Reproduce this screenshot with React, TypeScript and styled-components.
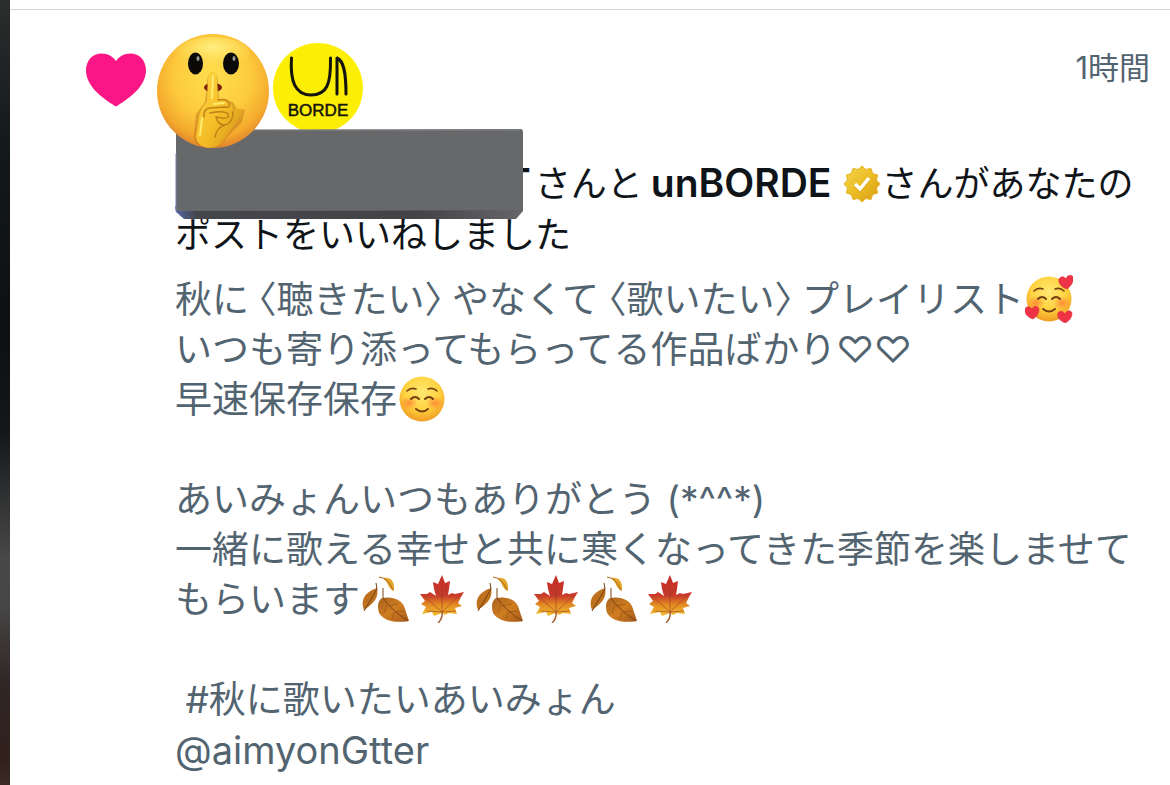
import React from "react";
import styled, { createGlobalStyle } from "styled-components";

const GlobalStyle = createGlobalStyle`
  * { box-sizing: border-box; }
  body {
    margin: 0;
    background: #ffffff;
    font-family: Inter, "Noto Sans CJK JP", sans-serif;
  }
`;

const Page = styled.div`
  display: flex;
  min-height: 100vh;
`;

const Rail = styled.div`
  flex: none;
  width: 10px;
  background: linear-gradient(
    #2a2e2d 0%, #14191b 18%, #0c1013 42%, #151719 55%,
    #484848 71%, #474646 77%, #302725 87%, #30201c 96%, #3a2a26 100%
  );
`;

const Feed = styled.main`
  flex: 1;
  min-width: 0;
  padding-top: 9px;
`;

const Notification = styled.article`
  display: grid;
  grid-template-columns: 90px minmax(0, 1fr);
  padding: 24px 20px 8px 75px;
  border-top: 1px solid #cfd5d5;
`;

const LikeColumn = styled.div`
  padding-top: 19px;
`;

const TopRow = styled.div`
  display: flex;
  align-items: flex-start;
  justify-content: space-between;
`;

const Avatars = styled.div`
  display: flex;
  gap: 4px;
  margin-left: -18px;
`;

const FaceAvatar = styled.svg`
  position: relative;
  z-index: 2;
  width: 112px;
  height: 114px;
`;

const LogoAvatar = styled.svg`
  width: 90px;
  height: 90px;
  margin-top: 9px;
`;

const Time = styled.time`
  margin-top: 12px;
  font-size: 31px;
  line-height: 44px;
  color: #536471;
`;

const Summary = styled.p`
  position: relative;
  margin: 9px 0 0;
  padding-right: 8px;
  font-size: 36px;
  line-height: 51px;
  color: #0f1419;
`;

const HiddenName = styled.span`
  display: inline-block;
  width: 330px;
`;

const Name = styled.strong<{ $before?: number; $after: number }>`
  margin: 0 ${(p) => p.$after}px 0 ${(p) => p.$before ?? 0}px;
  font-size: 39px;
  font-weight: 600;
`;

const Redaction = styled.svg`
  position: absolute;
  z-index: 1;
  top: -28px;
  left: 0;
  width: 349px;
  height: 91px;
`;

const Badge = styled.svg`
  width: 38px;
  height: 38px;
  vertical-align: -6px;
`;

const Post = styled.div`
  margin-top: 14px;
  padding-right: 8px;
  font-size: 37px;
  line-height: 50px;
  color: #536471;
`;

const Line = styled.div`
  min-height: 50px;
  white-space: pre-wrap;
`;

const Mention = styled.a`
  font-size: 38px;
  color: inherit;
  text-decoration: none;
`;

const Open = styled.span`
  margin-left: 9px;
  font-feature-settings: "halt";
`;

const Close = styled.span`
  margin-right: 9px;
  font-feature-settings: "halt";
`;

const EmojiArt = styled.svg`
  width: 48px;
  height: 48px;
  margin: 0 8px 0 1px;
  vertical-align: -10px;
`;

const Heart = () => (
  <svg width="62" height="54" viewBox="0 0 62 54" role="img" aria-label="いいね">
    <path fill="#fa1684" d="M31 53.500C22 48 1 35 1 17.500C1 7 8 .5 16.500 .5C23 .5 28 3.500 31 8C34 3.500 39 .5 45.500 .5C54 .5 61 7 61 17.500C61 35 40 48 31 53.500Z" />
  </svg>
);

const Shush = () => (
  <FaceAvatar viewBox="0 0 112 114" role="img" aria-label="しーっの顔">
    <defs>
      <radialGradient id="shushFace" cx="50%" cy="38%" r="62%">
        <stop offset="0" stopColor="#ffdf4f" />
        <stop offset=".55" stopColor="#fdcb3d" />
        <stop offset=".85" stopColor="#f4a92d" />
        <stop offset="1" stopColor="#e0852b" />
      </radialGradient>
      <radialGradient id="shushShine" cx="50%" cy="30%" r="60%">
        <stop offset="0" stopColor="#fff38c" stopOpacity=".9" />
        <stop offset="1" stopColor="#ffe25a" stopOpacity="0" />
      </radialGradient>
      <linearGradient id="shushHand" x1="0" y1="0" x2="1" y2="1">
        <stop offset="0" stopColor="#ffd845" />
        <stop offset=".55" stopColor="#f4bd27" />
        <stop offset="1" stopColor="#cf8b17" />
      </linearGradient>
    </defs>
    <ellipse cx="56" cy="57" rx="56" ry="57" fill="url(#shushFace)" />
    <ellipse cx="56" cy="20" rx="38" ry="17" fill="url(#shushShine)" />
    <ellipse cx="38.500" cy="29.500" rx="7.500" ry="11" fill="#0b0a09" />
    <ellipse cx="74" cy="29.500" rx="8" ry="11" fill="#0b0a09" />
    <ellipse cx="41" cy="24.500" rx="1.500" ry="2.500" fill="#9a9a96" />
    <ellipse cx="77" cy="24.500" rx="1.500" ry="2.500" fill="#9a9a96" />
    <ellipse cx="56" cy="53.500" rx="9" ry="4.500" fill="#7a1d10" />
    <path fill="#b0640f" opacity=".4" d="M48 68L50 47Q51 38 56 38Q61 39 61 47L62 65L76 68L80 75L88 76L85 88L71 102Q63 114 54 114Q37 114 37 101L39 80Z" />
    <path fill="url(#shushHand)" d="M50 67L51 44Q51 38 56 38Q60 38 60 44L61 66Q69 64 72 69Q76 70 76 78Q79 73 84 75Q88 78 82 84L69 103Q63 114 52 114Q39 112 39 102L42 83Q43 76 50 67Z" />
    <g fill="none" stroke="#bf8117" strokeWidth="1.500" strokeLinecap="round">
      <path d="M61 66Q70 64 72 69Q74 74 68 73L53 74Q46 75 47 83" />
      <path d="M53 79Q68 76 71 80Q73 85 65 84L59 83" />
      <path d="M59 83Q61 91 68 91Q76 89 76 78" />
      <path d="M68 91Q60 93 58 103" />
    </g>
    <path fill="none" stroke="#ffec73" strokeWidth="2" strokeLinecap="round" d="M56 42L55 64M45 84L43 101M57 70L67 69" />
  </FaceAvatar>
);

const LabelLogo = () => (
  <LogoAvatar viewBox="0 0 90 90" role="img" aria-label="unBORDE">
    <circle cx="45" cy="45" r="45" fill="#fcee04" />
    <g fill="none" stroke="#15150d" strokeWidth="3" strokeLinecap="round" strokeLinejoin="round">
      <path d="M18.500 15C17 38 22 52 38 52C54 52 58 41 57.500 15" />
      <path d="M64 51L64 15C71 18 73 30 73 51" />
    </g>
    <text x="45" y="73" textAnchor="middle" fontFamily="Liberation Sans, sans-serif" fontSize="17" stroke="#15150d" strokeWidth="0.5" fill="#15150d">BORDE</text>
  </LogoAvatar>
);

const Block = () => (
  <Redaction viewBox="0 0 349 92" preserveAspectRatio="none" aria-hidden="true">
    <defs>
      <linearGradient id="blockEdge" x1="0" x2="1" y1="0" y2="0">
        <stop offset="0" stopColor="#5568ad" />
        <stop offset=".06" stopColor="#45464c" />
        <stop offset=".7" stopColor="#444446" />
        <stop offset="1" stopColor="#66666a" />
      </linearGradient>
    </defs>
    <path d="M0 78L348 78L348 83L341 91L9 91L1 84Z" fill="url(#blockEdge)" />
    <path d="M1 2Q1 1 3 1L345 0Q348 0 348 3L348 82L1 83Z" fill="#67686a" />
    <path d="M1 25L1 83" stroke="#7582b4" strokeWidth="1" />
    <path d="M3 1L345 1" stroke="#858688" strokeWidth="1" />
  </Redaction>
);

const sealPoints = Array.from({ length: 24 }, (_, i) => {
  const a = (i * Math.PI) / 12 - Math.PI / 2;
  const r = i % 2 ? 15 : 18;
  return `${(19 + r * Math.cos(a)).toFixed(1)},${(19 + r * Math.sin(a)).toFixed(1)}`;
}).join(" ");

const Verified = () => (
  <Badge viewBox="0 0 38 38" role="img" aria-label="認証済み">
    <defs>
      <linearGradient id="seal" x1="0" y1="0" x2="1" y2="1">
        <stop offset="0" stopColor="#f6d54e" />
        <stop offset=".5" stopColor="#ebbd25" />
        <stop offset="1" stopColor="#d89a12" />
      </linearGradient>
    </defs>
    <polygon points={sealPoints} fill="url(#seal)" stroke="#e5b324" strokeWidth="1" strokeLinejoin="round" />
    <path d="M12 20L17 25L26 14" fill="none" stroke="#b98211" strokeWidth="3.500" opacity=".4" />
    <path d="M12 19L17 24L26 13" fill="none" stroke="#fff" strokeWidth="3.500" />
  </Badge>
);

const Smile = ({ hearts = false }: { hearts?: boolean }) => {
  const id = hearts ? "loveFace" : "calmFace";
  return (
    <EmojiArt viewBox="0 0 48 48" role="img" aria-label={hearts ? "ハートの笑顔" : "ほほえみ"}>
      <defs>
        <radialGradient id={id} cx="50%" cy="35%" r="65%">
          <stop offset="0" stopColor="#ffe873" />
          <stop offset=".6" stopColor="#ffd23f" />
          <stop offset="1" stopColor="#f09b24" />
        </radialGradient>
        <radialGradient id={`${id}Blush`}>
          <stop offset="0" stopColor="#ff6b31" stopOpacity=".7" />
          <stop offset="1" stopColor="#ff7a31" stopOpacity="0" />
        </radialGradient>
      </defs>
      <circle cx="24" cy="24" r="22.500" fill={`url(#${id})`} />
      <ellipse cx="11" cy="28" rx="9" ry="7" fill={`url(#${id}Blush)`} />
      <ellipse cx="37" cy="28" rx="9" ry="7" fill={`url(#${id}Blush)`} />
      <g fill="none" stroke="#734012" strokeWidth="2" strokeLinecap="round">
        <path d="M13 24Q17 20 21 24M27 24Q31 20 35 24" />
        <path d="M18 34Q24 39 30 34" />
        <path strokeWidth="1.600" d="M9 16Q13 12 18 14M30 14Q35 12 39 16" />
      </g>
      {hearts && (
        <g fill="#ef3347" stroke="#d72c3c" strokeWidth=".6">
          <path d="M42 14C36 12 33 8 34 4C36 1 39 1 41 4C42 0 46-1 48 2C49 7 46 11 42 14Z" />
          <path d="M8 44C2 42-1 38 0 34C1 31 5 31 7 34C9 30 13 31 14 34C14 39 11 42 8 44Z" />
          <path d="M40 48C34 45 32 42 33 38C35 35 38 36 40 39C42 35 46 35 47 38C47 43 44 46 40 48Z" />
        </g>
      )}
    </EmojiArt>
  );
};

const FallenLeaf = () => (
  <EmojiArt viewBox="0 0 48 48" role="img" aria-label="落ち葉">
    <defs>
      <linearGradient id="brownLeaf" x1="0" y1="0" x2="1" y2="1">
        <stop offset="0" stopColor="#a8611c" />
        <stop offset=".5" stopColor="#d07d20" />
        <stop offset="1" stopColor="#a4581a" />
      </linearGradient>
    </defs>
    <path d="M16 13C18 23 13 28 3 35C-1 25 4 17 16 13Z" fill="#bd701d" />
    <path d="M15 8L16 14Q11 23 3 36" fill="none" stroke="#764014" />
    <path d="M22 3C29 2 34 5 33 16C27 14 28 8 22 3Z" fill="#e4a52a" />
    <path d="M18 2Q27 3 32 15" fill="none" stroke="#a9691a" />
    <path d="M21 23C32 21 42 25 44 34L48 46C36 48 24 47 18 38C16 30 17 26 21 23Z" fill="url(#brownLeaf)" />
    <path d="M22 13L22 23Q29 34 47 46" fill="none" stroke="#7e4315" strokeWidth="1" />
    <path d="M27 31L37 29M34 37L43 36M26 30L23 38M33 37L31 44" fill="none" stroke="#8f4f17" strokeWidth=".6" />
  </EmojiArt>
);

const MapleLeaf = () => (
  <EmojiArt viewBox="0 0 48 48" role="img" aria-label="もみじ">
    <defs>
      <linearGradient id="maple" x1="0" y1="0" x2="0" y2="1">
        <stop offset="0" stopColor="#c92c28" />
        <stop offset=".5" stopColor="#c93a2b" />
        <stop offset=".72" stopColor="#e18a22" />
        <stop offset="1" stopColor="#f3c033" />
      </linearGradient>
    </defs>
    <path d="M24 0L27 8L32 6L31 14L30 20L34 18L37 19L46 17L43 22L40 28L44 31L37 33L39 39L31 38L27 40L24 38L16 41L14 37L4 39L8 32L3 29L7 26L2 19L9 19L12 17L18 21L16 14L15 7L20 9Z" fill="url(#maple)" />
    <g fill="none" stroke="#9c3a22" strokeWidth=".6">
      <path d="M24 3L24 37M24 37L6 21M24 37L42 20M24 37L9 36M24 37L38 36M24 23L18 13M24 22L29 12" />
      <path d="M24 37Q25 43 20 48" stroke="#a45c31" strokeWidth="1.500" />
    </g>
  </EmojiArt>
);

export default function App() {
  return (
    <>
      <GlobalStyle />
      <Page>
        <Rail />
        <Feed>
          <Notification>
            <LikeColumn>
              <Heart />
            </LikeColumn>
            <div>
              <TopRow>
                <Avatars>
                  <Shush />
                  <LabelLogo />
                </Avatars>
                <Time>1時間</Time>
              </TopRow>
              <Summary>
                <HiddenName />
                <Name $after={4}>T</Name>さんと<Name $before={8} $after={12}>unBORDE</Name>
                <Verified />さんがあなたの{"ポストをいいねしました"}
                <Block />
              </Summary>
              <Post>
                <Line>
                  秋に<Open>〈</Open>聴きたい<Close>〉</Close>やなくて<Open>〈</Open>歌いたい<Close>〉</Close>プレイリスト<Smile hearts />
                </Line>
                <Line>いつも寄り添ってもらってる作品ばかり♡♡</Line>
                <Line>早速保存保存<Smile /></Line>
                <Line />
                <Line>あいみょんいつもありがとう (*^^*)</Line>
                <Line>
                  一緒に歌える幸せと共に寒くなってきた季節を楽しませて{"もらいます"}<FallenLeaf /><MapleLeaf /><FallenLeaf /><MapleLeaf /><FallenLeaf /><MapleLeaf />
                </Line>
                <Line />
                <Line>{" #秋に歌いたいあいみょん"}</Line>
                <Line><Mention href="#aimyonGtter">@aimyonGtter</Mention></Line>
              </Post>
            </div>
          </Notification>
        </Feed>
      </Page>
    </>
  );
}
